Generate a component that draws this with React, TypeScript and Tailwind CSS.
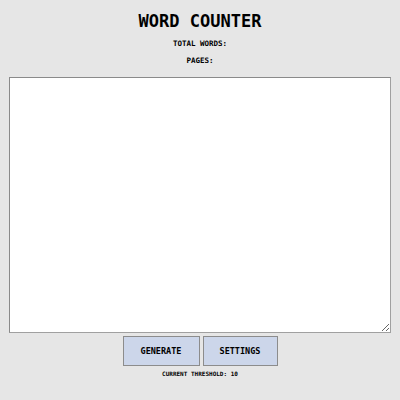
import React, { useState } from 'react';

export default function App() {
  const [text, setText] = useState('');
  const words = text.trim() ? text.trim().split(/\s+/).length : 0;

  return (
    <div
      className="w-[400px] h-[400px] bg-[#e6e6e6] flex flex-col items-center pt-[12px] uppercase"
      style={{ fontFamily: '"DejaVu Sans Mono", "Liberation Mono", monospace' }}
    >
      <h1 className="text-[17px] leading-[18px] font-bold text-black">Word Counter</h1>
      <p className="mt-[10px] text-[7.5px] leading-[8px] font-bold text-black">Total Words:{words > 0 ? ` ${words}` : ''}</p>
      <p className="mt-[9px] text-[7.5px] leading-[8px] font-bold text-black">Pages:</p>

      {/* text input */}
      <textarea
        value={text}
        onChange={(e) => setText(e.target.value)}
        className="mt-[12px] w-[382px] h-[256px] bg-white border border-[#a0a0a0] border-t-[#8a8a8a] border-l-[#8a8a8a] outline-none resize-y p-1 text-xs"
      />

      <div className="flex gap-[3px] mt-[3px]">
        <button className="w-[77px] h-[30px] bg-[#ccd6ea] border border-[#8c8c8c] text-[8.5px] font-bold text-black uppercase">
          Generate
        </button>
        <button className="w-[75px] h-[30px] bg-[#ccd6ea] border border-[#8c8c8c] text-[8.5px] font-bold text-black uppercase">
          Settings
        </button>
      </div>
      <p className="mt-[4px] text-[6px] leading-[8px] font-bold text-black">Current Threshold: 10</p>
    </div>
  );
}
